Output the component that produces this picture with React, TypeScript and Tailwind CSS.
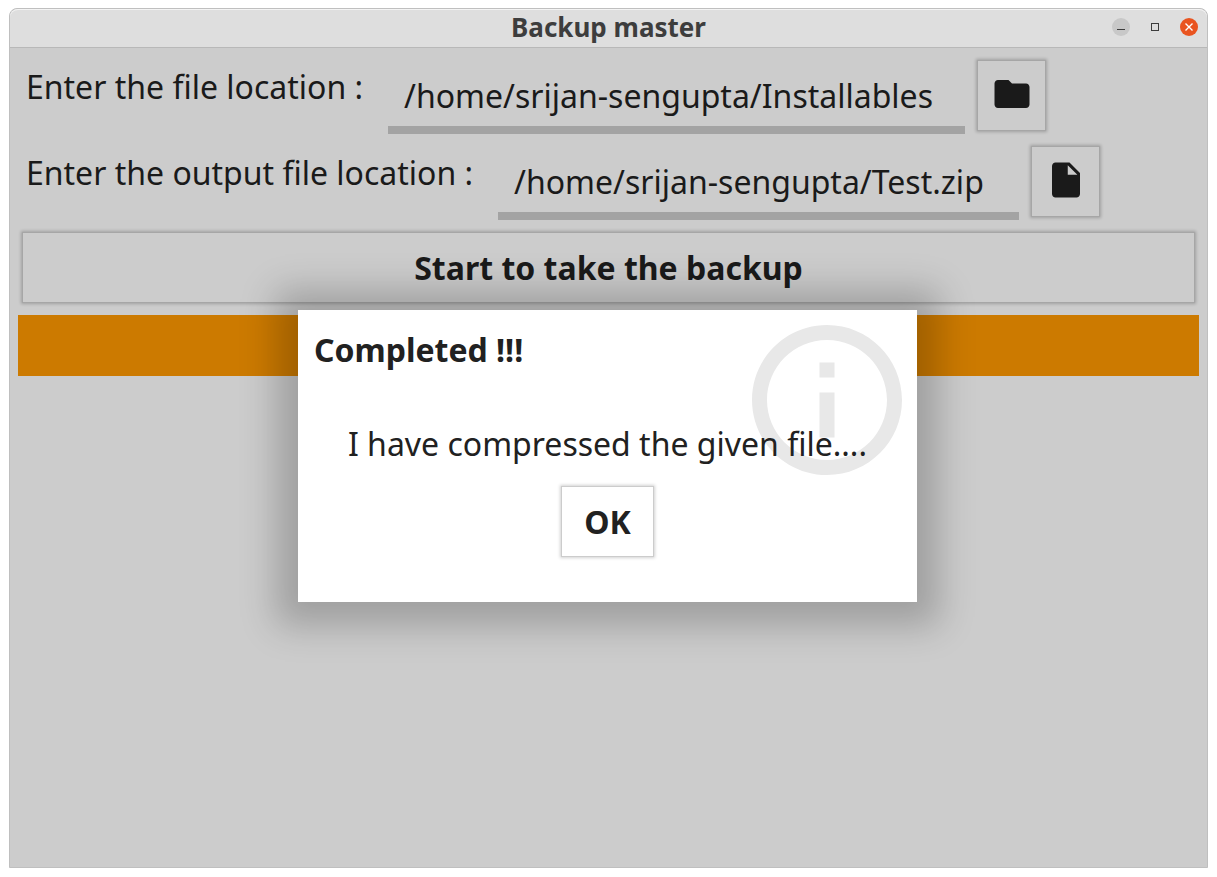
import type { ReactNode } from "react";

function IconButton({ label, path }: { label: string; path: string }) {
  return (
    <button
      type="button"
      aria-label={label}
      className="ml-3 mt-1 flex h-[71px] w-[69px] shrink-0 items-center justify-center border border-[#a6a6a6] shadow-[0_0_3px_1px_rgba(0,0,0,0.22)]"
    >
      <svg viewBox="0 0 24 24" className="mb-1 h-[42px] w-[42px]" fill="#1a1a1a" aria-hidden="true">
        <path d={path} />
      </svg>
    </button>
  );
}

function FileRow({
  id,
  label,
  value,
  width,
  children,
}: {
  id: string;
  label: string;
  value: string;
  width: string;
  children: ReactNode;
}) {
  return (
    <div className="flex h-[78px] items-start">
      <label htmlFor={id} className="whitespace-pre pl-2 pr-[25px] pt-2 leading-[46px]">
        {label}
      </label>
      <input
        id={id}
        type="text"
        defaultValue={value}
        className={`h-[78px] min-w-0 border-b-8 border-[#a3a3a3] bg-transparent px-4 pt-2 outline-none ${width}`}
      />
      {children}
    </div>
  );
}

function TitleBar() {
  return (
    <header className="relative flex h-[39px] items-center justify-end rounded-t-lg border-b border-[#b8b8b8] bg-[#dedede] pb-0.5 shadow-[inset_0_1px_0_#f4f4f4]">
      <h1 className="absolute inset-x-0 text-center text-[26px] font-bold leading-9 text-[#3d3d3d]">Backup master</h1>
      <div className="relative mr-[9px] flex items-center gap-4">
        <button type="button" aria-label="Minimize" className="block h-[18px] w-[18px] rounded-full bg-[#c8c8c8]">
          <svg viewBox="0 0 18 18" className="h-[18px] w-[18px]" aria-hidden="true">
            <path d="M5 11.5h8" stroke="#3d3d3d" />
          </svg>
        </button>
        <button type="button" aria-label="Maximize" className="block h-[18px] w-[18px]">
          <svg viewBox="0 0 18 18" className="h-[18px] w-[18px]" aria-hidden="true">
            <rect x="5.5" y="5.5" width="7" height="7" fill="none" stroke="#3d3d3d" />
          </svg>
        </button>
        <button type="button" aria-label="Close" className="block h-[18px] w-[18px] rounded-full bg-[#e95420]">
          <svg viewBox="0 0 18 18" className="h-[18px] w-[18px]" aria-hidden="true">
            <path d="M5.5 5.5l7 7M12.5 5.5l-7 7" stroke="#fff" strokeWidth="1.4" />
          </svg>
        </button>
      </div>
    </header>
  );
}

function CompletedDialog() {
  return (
    <div className="absolute inset-0 flex items-center justify-center pb-[3px] pr-0.5">
      <div
        role="dialog"
        aria-labelledby="dialog-title"
        className="relative flex flex-col bg-white px-4 pb-[45px] pt-[17px] text-[#212121] shadow-[0_2px_34px_22px_rgba(0,0,0,0.22)]"
      >
        <svg viewBox="0 0 24 24" className="absolute right-0 top-0 h-[180px] w-[180px]" fill="#e8e8e8" aria-hidden="true">
          <path d="M11 7h2v2h-2zm0 4h2v6h-2zm1-9C6.48 2 2 6.48 2 12s4.48 10 10 10 10-4.48 10-10S17.52 2 12 2zm0 18c-4.41 0-8-3.59-8-8s3.59-8 8-8 8 3.59 8 8-3.59 8-8 8z" />
        </svg>
        <h2 id="dialog-title" className="relative font-bold leading-[46px]">
          Completed !!!
        </h2>
        <p className="relative mt-12 px-[34px] leading-[46px]">I have compressed the given file....</p>
        <button
          type="button"
          className="relative mt-[19px] flex h-[71px] w-[93px] items-center justify-center self-center border border-[#cccccc] bg-white font-bold shadow-[0_0_3px_1px_rgba(0,0,0,0.18)]"
        >
          OK
        </button>
      </div>
    </div>
  );
}

export default function App() {
  return (
    <div className="flex min-h-screen flex-col bg-white px-[9px] pb-[9px] pt-2 font-['Noto_Sans',sans-serif] text-[32px] text-[#1a1a1a]">
      <div className="flex grow flex-col rounded-t-lg border border-[#bfbfbf] bg-[#cccccc]">
        <TitleBar />
        <main className="relative grow">
          <div className="flex flex-col gap-2 px-2 pt-2">
            <FileRow
              id="source"
              label="Enter the file location :"
              value="/home/srijan-sengupta/Installables"
              width="w-[577px]"
            >
              <IconButton
                label="Choose folder"
                path="M10 4H4c-1.1 0-1.99.9-1.99 2L2 18c0 1.1.9 2 2 2h16c1.1 0 2-.9 2-2V8c0-1.1-.9-2-2-2h-8l-2-2z"
              />
            </FileRow>
            <FileRow
              id="output"
              label="Enter the output file location :"
              value="/home/srijan-sengupta/Test.zip"
              width="w-[521px]"
            >
              <IconButton
                label="Choose output file"
                path="M6 2c-1.1 0-1.99.9-1.99 2L4 20c0 1.1.89 2 1.99 2H18c1.1 0 2-.9 2-2V8l-6-6H6zm7 7V3.5L18.5 9H13z"
              />
            </FileRow>
            <button
              type="button"
              className="m-1 h-[71px] border border-[#a6a6a6] font-bold shadow-[0_0_3px_1px_rgba(0,0,0,0.22)]"
            >
              Start to take the backup
            </button>
            <div className="h-[61px] bg-[#cc7a00]" />
          </div>
          <CompletedDialog />
        </main>
      </div>
    </div>
  );
}
